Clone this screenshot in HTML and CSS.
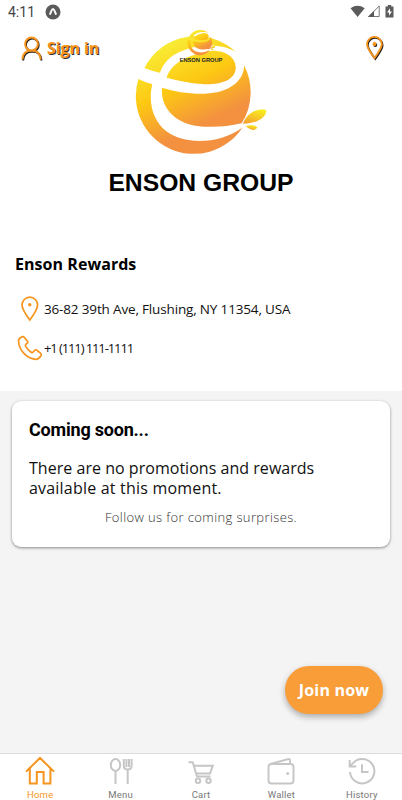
FILE: index.html
```
<!DOCTYPE html>
<html lang="en">
<head>
    <meta charset="UTF-8">
    <title>Enson Rewards</title>
    <link rel="stylesheet" href="styles.css">
</head>
<body>
<svg class="defs" width="0" height="0">
    <defs>
        <linearGradient id="sun" gradientUnits="userSpaceOnUse" x1="120" y1="75" x2="260" y2="370">
            <stop offset="0" stop-color="#f8ed36"/>
            <stop offset="0.42" stop-color="#fdc812"/>
            <stop offset="0.82" stop-color="#f39140"/>
            <stop offset="1" stop-color="#f39140"/>
        </linearGradient>
        <linearGradient id="drop" x1="0.7" y1="0" x2="0.2" y2="1">
            <stop offset="0" stop-color="#f8ed20"/>
            <stop offset="1" stop-color="#f5a030"/>
        </linearGradient>
        <symbol id="enson" viewBox="0 0 450 420">
            <g fill="url(#sun)">
                <path d="M58 150A174 174 0 0 1 334 103C290 75 220 78 165 101C132 115 113 139 105 164Q80 159 58 150z"/>
                <path d="M125 179C138 130 202 106 262 98C310 98 334 123 332 153C328 187 285 202 230 198Q180 194 125 179z"/>
                <path d="M111 209C151 221 190 228 240 227C310 225 358 190 357 142A174 174 0 0 1 350 316C300 328 250 329 211 323C151 313 106 270 111 209z"/>
                <path d="M40 183Q61 193 82 199C69 250 82 307 124 340C182 383 285 377 352 329A174 174 0 0 1 40 183z"/>
            </g>
            <g fill="url(#drop)">
                <path d="M354 317C365 285 397 270 424 276C424 300 397 315 354 317z"/>
                <path d="M362 324C378 321 391 321 397 328C391 340 378 338 362 324z"/>
            </g>
        </symbol>
    </defs>
</svg>

<div class="status">
    <span class="clock">4:11</span>
    <svg class="expo" width="16" height="16" viewBox="0 0 16 16">
        <circle cx="8" cy="8" r="7.5" fill="#5b5b5b"/>
        <path d="M4.9 10.6Q7 5 8 5t3.1 5.6" fill="none" stroke="#fff" stroke-width="2"/>
    </svg>
    <svg class="signals" width="46" height="14" viewBox="0 0 46 14">
        <path d="M.5 3.2Q7.500-1.700 14.700 3.200L7.600 12z" fill="#5b5b5b"/>
        <path d="M29.200 1v10.500H18.600z" fill="#fff" stroke="#777"/>
        <path d="M24 6v6h-6z" fill="#5b5b5b"/>
        <path d="M35.500 1.500h2.300V0h3.400v1.500h2.300V12.500h-8z" fill="#5b5b5b"/>
        <path d="M40 3.300L37 7.500h2v3.300l3-4.300h-2z" fill="#fff"/>
    </svg>
</div>

<div class="top">
    <div class="signin">
        <svg width="22" height="26" viewBox="0 0 22 26" fill="none" stroke-width="2">
            <g stroke="#222" transform="translate(.8 1)">
                <circle cx="10.500" cy="8" r="6.400"/>
                <path d="M1.300 23.500Q2 14.500 10.500 14.500t9.200 9"/>
            </g>
            <g stroke="#f7941d">
                <circle cx="10.500" cy="8" r="6.400"/>
                <path d="M1.300 23.500Q2 14.500 10.500 14.500t9.200 9"/>
            </g>
        </svg>
        <span>Sign in</span>
    </div>
    <svg class="place" width="18" height="25" viewBox="0 0 18 25" fill="none" stroke-width="1.900">
        <g stroke="#222" transform="translate(.8 1)">
            <path d="M8.500 22Q1 12 1 8.300a7.400 7.400 0 0 1 14.800 0Q15.800 12 8.500 22z"/>
            <circle cx="8.500" cy="8" r="1"/>
        </g>
        <g stroke="#f7941d">
            <path d="M8.500 22Q1 12 1 8.300a7.400 7.400 0 0 1 14.800 0Q15.800 12 8.500 22z"/>
            <circle cx="8.500" cy="8" r="1"/>
        </g>
    </svg>
    <div class="brand">
        <svg class="brand-logo" width="150" height="140"><use href="#enson"/></svg>
        <div class="brand-name">ENSON GROUP</div>
        <div class="mini">
            <svg width="32.300" height="30.100"><use href="#enson"/></svg>
            <span>ENSON GROUP</span>
        </div>
    </div>
</div>

<div class="info">
    <h1><span>Enson Rewards</span></h1>
    <div class="row address">
        <svg width="18" height="26" viewBox="0 0 18 26" fill="none" stroke="#f7941d" stroke-width="1.700">
            <path d="M8.800 24Q1 13.500 1 9a7.800 7.800 0 0 1 15.600 0Q16.600 13.500 8.800 24z"/>
            <circle cx="8.800" cy="8.800" r="1.700" fill="#f7941d" stroke="none"/>
        </svg>
        <span>36-82 39th Ave, Flushing, NY 11354, USA</span>
    </div>
    <div class="row phone">
        <svg width="26" height="26" viewBox="0 0 26 26" fill="none" stroke="#f7941d" stroke-width="1.700" stroke-linejoin="round">
            <path d="M5.600 1.600C3.500 2.300 1.600 4.200 1.500 6.200C2.200 15.500 9.500 23.500 18.500 24.300C21 24.300 23 22.300 24.300 20.200Q24.500 19 23.500 18.200L19.500 15Q18.500 14.400 17.700 15.300L16 17.300Q14.900 18 13.800 17Q10.500 14.500 8.600 11.400Q8 10.200 8.800 9.400L10.500 8Q11.200 7.200 10.500 6.300L7.200 2.200Q6.500 1.300 5.600 1.600z"/>
        </svg>
        <span>+1 (111) 111-1111</span>
    </div>
</div>

<div class="card">
    <h2>Coming soon...</h2>
    <p class="message"><span class="line1">There are no promotions and rewards</span><br><span class="line2">available at this moment.</span></p>
    <p class="follow">Follow us for coming surprises.</p>
</div>

<button class="join">Join now</button>

<div class="tabs">
    <a class="tab active">
        <svg width="32" height="30" viewBox="0 0 32 30" fill="none" stroke="currentColor" stroke-width="2">
            <path d="M2 15.600L16 2l14 13.600M5.800 12.500V27.500h7V16h6.800v11.500h6.800v-15"/>
        </svg>
        <span>Home</span>
    </a>
    <a class="tab">
        <svg width="32" height="30" viewBox="0 0 32 30" fill="none" stroke="currentColor" stroke-width="2">
            <ellipse cx="10.500" cy="9" rx="4.700" ry="5.900"/>
            <path d="M10.500 15v13M18.800 3v6.500q0 4 3.900 4t3.900-4V3M21.400 3v8M24 3v8M22.700 13v15"/>
        </svg>
        <span>Menu</span>
    </a>
    <a class="tab">
        <svg width="32" height="30" viewBox="0 0 32 30" fill="none" stroke="currentColor" stroke-width="2">
            <path d="M3.500 6.200h4.200L12 20.500h13.500M9 9.700h18.800L25 17.500H11"/>
            <circle cx="13" cy="24.700" r="2.200"/>
            <circle cx="23.500" cy="24.700" r="2.200"/>
        </svg>
        <span>Cart</span>
    </a>
    <a class="tab">
        <svg width="32" height="30" viewBox="0 0 32 30" fill="none" stroke="currentColor" stroke-width="1.900">
            <path d="M3.500 11q0-3 3-3h19q3 0 3 3v13.500q0 3-3 3h-19q-3 0-3-3zM5.500 8L23.500 3q1.500-.3 1.500 1.200V8"/>
            <circle cx="22.700" cy="17.500" r="1.500" fill="currentColor" stroke="none"/>
        </svg>
        <span>Wallet</span>
    </a>
    <a class="tab">
        <svg width="32" height="30" viewBox="0 0 32 30" fill="none" stroke="currentColor" stroke-width="2">
            <path d="M4 16a12.200 12.200 0 1 0 2.500-8.300L3.800 10.300M3.700 4v6.500h6.500M16 8.200V16h6.500"/>
        </svg>
        <span>History</span>
    </a>
</div>
</body>
</html>
```
FILE: styles.css
```
*{
    box-sizing: border-box;
}
body{
    display: flex;
    flex-direction: column;
    position: relative;
    margin: 0;
    height: 800px;
    overflow: hidden;
    background-color: #f4f4f4;
    font-family: "Open Sans", "Noto Sans", sans-serif;
    color: #111;
}
h1, h2, p{
    margin: 0;
}
svg{
    display: block;
    flex: none;
}
.defs{
    position: absolute;
}
.status{
    display: flex;
    align-items: center;
    height: 24px;
    padding: 0 6px 0 8px;
    background: #fff;
}
.clock{
    width: 37px;
    font: 14px/24px Roboto, sans-serif;
    color: #444;
}
.signals{
    margin-left: auto;
}
.top{
    display: flex;
    position: relative;
    justify-content: space-between;
    height: 221px;
    padding: 12px 18px 0 21px;
    background: #fff;
}
.signin{
    display: flex;
    height: 26px;
    gap: 4px;
    font-size: 16px;
    font-weight: bold;
    line-height: 24px;
    letter-spacing: -0.1px;
    color: #f7941d;
    text-shadow: 1px 1px 0 #333;
}
/* logo is centred under the header actions */
.brand{
    position: absolute;
    top: -6px;
    left: 0;
    width: 402px;
}
.brand-logo{
    margin-left: 125px;
}
.brand-name{
    margin-top: 10px;
    font: bold 24.7px/30px "Liberation Sans", Arial, sans-serif;
    text-align: center;
    color: #000;
}
.mini{
    display: flex;
    flex-direction: column;
    align-items: center;
    position: absolute;
    top: 8px;
    left: 179px;
    width: 44px;
}
.mini span{
    margin-top: 1px;
    font: bold 5.7px/7px "Liberation Sans", Arial, sans-serif;
    white-space: nowrap;
    color: #222;
}
.info{
    height: 146px;
    padding: 7px 15px 0;
    background: #fff;
}
.info h1{
    font-size: 16px;
    line-height: 24px;
    letter-spacing: 0.05px;
    color: #000;
}
.row{
    display: flex;
    align-items: center;
    font-size: 13.5px;
    height: 26px;
    white-space: nowrap;
}
.address{
    margin-top: 20px;
    padding-left: 6px;
    gap: 5px;
    letter-spacing: -0.16px;
}
.phone{
    margin-top: 13px;
    padding-left: 2px;
    gap: 1px;
    font-size: 13px;
    letter-spacing: -1.1px;
}
.card{
    height: 146px;
    margin: 10px 12px 0 12px;
    padding: 17px;
    border-radius: 9px;
    background: #fff;
    box-shadow: 0 1px 3px rgba(0,0,0,.45);
}
.card h2{
    font: bold 18px/24px Roboto, sans-serif;
    letter-spacing: -0.2px;
    color: #000;
}
.message{
    margin-top: 16px;
    font-size: 16px;
    line-height: 20px;
    white-space: nowrap;
}
.line1{
    letter-spacing: 0.03px;
}
.line2{
    letter-spacing: 0.2px;
}
.follow{
    margin-top: 9px;
    font-size: 13px;
    font-weight: 300;
    line-height: 20px;
    letter-spacing: 0.38px;
    text-align: center;
    color: #333;
}
.join{
    align-self: flex-end;
    width: 98px;
    height: 48px;
    margin: auto 19px 39px 0;
    padding: 0;
    border: 0;
    border-radius: 24px;
    background-color: #f89d38;
    font: bold 16px/48px "Open Sans", sans-serif;
    letter-spacing: 0.2px;
    color: #fff;
    box-shadow: 0 3px 6px rgba(0,0,0,.3);
}
.tabs{
    display: flex;
    height: 47px;
    border-top: 1px solid #ddd;
    background: #fff;
}
.tab{
    display: flex;
    flex: 1;
    flex-direction: column;
    align-items: center;
    padding-top: 2px;
    color: #c6c6c6;
}
.tab span{
    margin-top: 3px;
    font: 9.5px/12px Roboto, sans-serif;
    letter-spacing: 0.2px;
    color: #777;
}
.active, .active span{
    color: #f7941d;
}
```
